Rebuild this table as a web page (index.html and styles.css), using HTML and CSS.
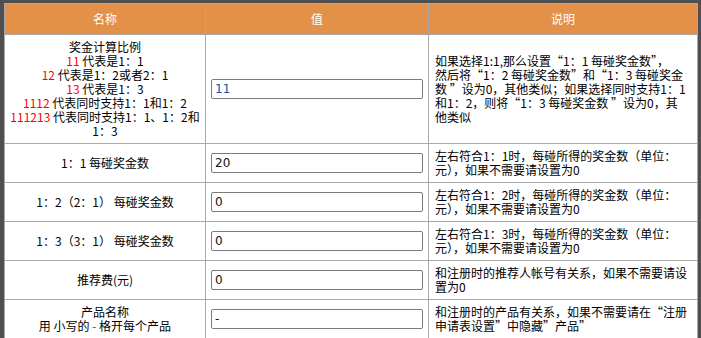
FILE: index.html
```html
<!DOCTYPE html>
<html lang="zh-CN">
<head>
<meta charset="utf-8">
<title>奖金设置</title>
<link rel="stylesheet" href="styles.css">
</head>
<body>
<div class="page">
  <table class="settings">
    <colgroup>
      <col class="c-name">
      <col class="c-value">
      <col class="c-desc">
    </colgroup>
    <thead>
      <tr>
        <th>名称</th>
        <th>值</th>
        <th>说明</th>
      </tr>
    </thead>
    <tbody>
      <tr>
        <td class="name">奖金计算比例<br><span class="red">11</span> 代表是1：1<br><span class="red">12</span> 代表是1：2或者2：1<br><span class="red">13</span> 代表是1：3<br><span class="red">1112</span> 代表同时支持1：1和1：2<br><span class="red">111213</span> 代表同时支持1：1、1：2和<br>1：3</td>
        <td class="value"><input class="field field-blue" type="text" value="11"></td>
        <td class="desc">如果选择1:1,那么设置“1：1 每碰奖金数”，<br>然后将“1：2 每碰奖金数”和“1：3 每碰奖金<br>数 ”设为0，其他类似；如果选择同时支持1：1<br>和1：2，则将“1：3 每碰奖金数 ”设为0，其<br>他类似</td>
      </tr>
      <tr>
        <td class="name">1：1 每碰奖金数</td>
        <td class="value"><input class="field" type="text" value="20"></td>
        <td class="desc">左右符合1：1时，每碰所得的奖金数（单位：<br>元），如果不需要请设置为0</td>
      </tr>
      <tr>
        <td class="name">1：2（2：1） 每碰奖金数</td>
        <td class="value"><input class="field" type="text" value="0"></td>
        <td class="desc">左右符合1：2时，每碰所得的奖金数（单位：<br>元），如果不需要请设置为0</td>
      </tr>
      <tr>
        <td class="name">1：3（3：1） 每碰奖金数</td>
        <td class="value"><input class="field" type="text" value="0"></td>
        <td class="desc">左右符合1：3时，每碰所得的奖金数（单位：<br>元），如果不需要请设置为0</td>
      </tr>
      <tr>
        <td class="name">推荐费(元)</td>
        <td class="value"><input class="field" type="text" value="0"></td>
        <td class="desc">和注册时的推荐人帐号有关系，如果不需要请设<br>置为0</td>
      </tr>
      <tr>
        <td class="name">产品名称<br>用 小写的 <span class="red">-</span> 格开每个产品</td>
        <td class="value"><input class="field" type="text" value="-"></td>
        <td class="desc">和注册时的产品有关系，如果不需要请在“注册<br>申请表设置”中隐藏”产品”</td>
      </tr>
    </tbody>
  </table>
</div>
</body>
</html>
```

FILE: styles.css
```css
html, body {
  margin: 0;
  padding: 0;
  background: #4f4f51;
}

.page {
  padding: 3px 4px;
}

.settings {
  width: 693px;
  border-collapse: collapse;
  table-layout: fixed;
  background: #fff;
  font-family: "Noto Sans CJK SC", "Noto Sans", sans-serif;
  font-size: 12px;
  line-height: 14px;
  color: #000;
}

.c-name { width: 201px; }
.c-value { width: 223px; }
.c-desc { width: 269px; }

.settings th,
.settings td {
  border: 1px solid #a9a9a9;
}

.settings th {
  background: #e39049;
  color: #fff;
  font-weight: normal;
  height: 30px;
  padding: 0;
  text-align: center;
  vertical-align: middle;
}

.settings td {
  padding: 5px 6px;
  vertical-align: middle;
  white-space: nowrap;
}

.settings td.name {
  text-align: center;
  padding: 5px 2px;
}

.settings td.value {
  padding-left: 5px;
}

.red {
  color: #f00;
}

.field {
  display: block;
  box-sizing: border-box;
  width: 212px;
  height: 20px;
  margin: 0;
  padding: 0 3px;
  border: 1px solid #7a7a7a;
  border-radius: 2px;
  background: #fff;
  font-family: "DejaVu Sans", sans-serif;
  font-size: 12px;
  color: #111;
  outline: none;
}

.field-blue {
  color: #1550a0;
}
```
